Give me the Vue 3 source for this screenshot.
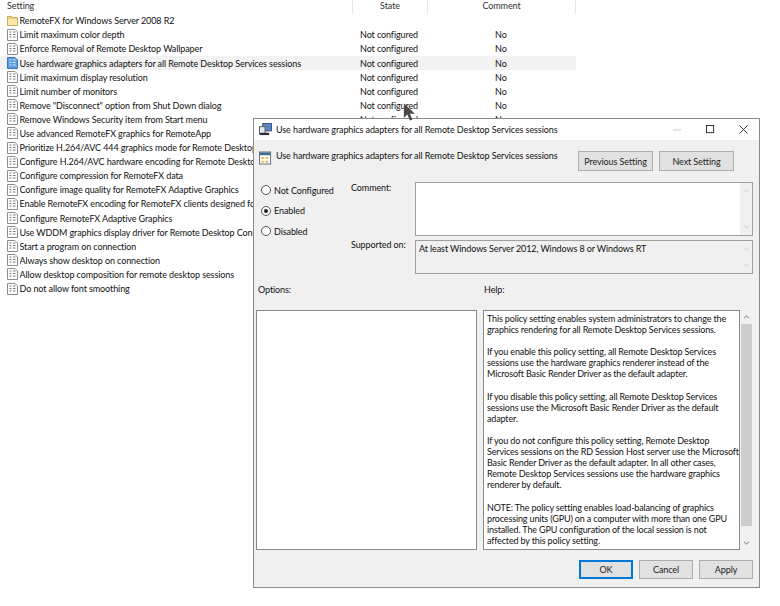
<script setup>
const rows = [
  ['folder', 'RemoteFX for Windows Server 2008 R2', '', ''],
  ['doc', 'Limit maximum color depth', 'Not configured', 'No'],
  ['doc', 'Enforce Removal of Remote Desktop Wallpaper', 'Not configured', 'No'],
  ['sel', 'Use hardware graphics adapters for all Remote Desktop Services sessions', 'Not configured', 'No'],
  ['doc', 'Limit maximum display resolution', 'Not configured', 'No'],
  ['doc', 'Limit number of monitors', 'Not configured', 'No'],
  ['doc', 'Remove "Disconnect" option from Shut Down dialog', 'Not configured', 'No'],
  ['doc', 'Remove Windows Security item from Start menu', 'Not configured', 'No'],
  ['doc', 'Use advanced RemoteFX graphics for RemoteApp', '', ''],
  ['doc', 'Prioritize H.264/AVC 444 graphics mode for Remote Desktop Connections', '', ''],
  ['doc', 'Configure H.264/AVC hardware encoding for Remote Desktop Connections', '', ''],
  ['doc', 'Configure compression for RemoteFX data', '', ''],
  ['doc', 'Configure image quality for RemoteFX Adaptive Graphics', '', ''],
  ['doc', 'Enable RemoteFX encoding for RemoteFX clients designed for Windows', '', ''],
  ['doc', 'Configure RemoteFX Adaptive Graphics', '', ''],
  ['doc', 'Use WDDM graphics display driver for Remote Desktop Connections', '', ''],
  ['doc', 'Start a program on connection', '', ''],
  ['doc', 'Always show desktop on connection', '', ''],
  ['doc', 'Allow desktop composition for remote desktop sessions', '', ''],
  ['doc', 'Do not allow font smoothing', '', '']
]
const radios = [
  ['Not Configured', false],
  ['Enabled', true],
  ['Disabled', false]
]
const help = `This policy setting enables system administrators to change the
graphics rendering for all Remote Desktop Services sessions.

If you enable this policy setting, all Remote Desktop Services
sessions use the hardware graphics renderer instead of the
Microsoft Basic Render Driver as the default adapter.

If you disable this policy setting, all Remote Desktop Services
sessions use the Microsoft Basic Render Driver as the default
adapter.

If you do not configure this policy setting, Remote Desktop
Services sessions on the RD Session Host server use the Microsoft
Basic Render Driver as the default adapter. In all other cases,
Remote Desktop Services sessions use the hardware graphics
renderer by default.

NOTE: The policy setting enables load-balancing of graphics
processing units (GPU) on a computer with more than one GPU
installed. The GPU configuration of the local session is not
affected by this policy setting.`
const title = 'Use hardware graphics adapters for all Remote Desktop Services sessions'
</script>

<template>
  <div class="page">
    <div class="head">
      <span class="h1">Setting</span>
      <span class="h2">State</span>
      <span class="h3">Comment</span>
    </div>
    <div class="list">
      <div v-for="r in rows" :key="r[1]" class="row" :class="{ selected: r[0] === 'sel' }">
        <svg v-if="r[0] === 'folder'" class="ico" viewBox="0 0 11 12">
          <path d="M.5 1.500h4l1 1h5v8H.5z" fill="#f0cf7c" stroke="#d0b060" />
          <path d="M1 4h9v6H1z" fill="#fbe6a8" />
        </svg>
        <svg v-else class="ico" viewBox="0 0 11 12">
          <path d="M.5.500h7.500l2.500 2.500v8.500H.5z" :fill="r[0] === 'sel' ? '#5b9ddd' : '#fff'" :stroke="r[0] === 'sel' ? '#3a78bd' : '#8c8c8c'" />
          <path d="M2.500 3h2M2.500 5.500h2M2.500 8h2M6 3h2.500M6 5.500h2.500M6 8h2.500" :stroke="r[0] === 'sel' ? '#dcecff' : '#777'" />
        </svg>
        <span class="name">{{ r[1] }}</span>
        <span class="state">{{ r[2] }}</span>
        <span class="comment">{{ r[3] }}</span>
      </div>
    </div>

    <section class="dialog">
      <header class="titlebar">
        <svg class="tico" viewBox="0 0 14 14">
          <rect x="4" y="0.500" width="9.500" height="8" fill="#5a86c8" stroke="#33507f" />
          <rect x="0.500" y="4" width="6" height="8" fill="#e8e8e8" stroke="#555" />
          <path d="M1 10.500h10v2.500H1z" fill="#30303a" />
        </svg>
        <span class="ttext">{{ title }}</span>
        <div class="winbtns">
          <svg viewBox="0 0 10 10"><path d="M0 5.500h9" stroke="#c6c6c6" /></svg>
          <svg viewBox="0 0 10 10"><rect x=".5" y=".5" width="8" height="8" fill="none" stroke="#222" /></svg>
          <svg viewBox="0 0 10 10"><path d="M.5.500l9 9M9.500.500l-9 9" stroke="#222" fill="none" /></svg>
        </div>
      </header>

      <div class="body">
        <div class="top">
          <svg class="pico" viewBox="0 0 14 14">
            <rect x=".5" y=".5" width="12" height="13" fill="#fff" stroke="#5b6b78" />
            <rect x="1" y="1" width="11" height="3" fill="#3d6b8f" />
            <path d="M2.500 6h3v2h-3zM7 6h3v2H7zM2.500 10h3v2h-3zM7 10h3v2H7z" fill="#e6b95a" />
          </svg>
          <span class="ptitle">{{ title }}</span>
          <div class="navbtns">
            <button class="btn nav">Previous Setting</button>
            <button class="btn nav">Next Setting</button>
          </div>
        </div>

        <div class="middle">
          <div class="radios">
            <label v-for="o in radios" :key="o[0]" class="radio">
              <span class="dot" :class="{ on: o[1] }"></span><span>{{ o[0] }}</span>
            </label>
          </div>
          <div class="fields">
            <div class="field f1">
              <span class="flabel">Comment:</span>
              <div class="box white">
                <div class="sb">
                  <svg viewBox="0 0 8 5"><path d="M1 4l3-3 3 3" fill="none" stroke="#c2c2c2" /></svg>
                  <svg viewBox="0 0 8 5"><path d="M1 1l3 3 3-3" fill="none" stroke="#c2c2c2" /></svg>
                </div>
              </div>
            </div>
            <div class="field f2">
              <span class="flabel">Supported on:</span>
              <div class="box">
                <span class="sup">At least Windows Server 2012, Windows 8 or Windows RT</span>
                <div class="sb">
                  <svg viewBox="0 0 8 5"><path d="M1 4l3-3 3 3" fill="none" stroke="#c2c2c2" /></svg>
                  <svg viewBox="0 0 8 5"><path d="M1 1l3 3 3-3" fill="none" stroke="#c2c2c2" /></svg>
                </div>
              </div>
            </div>
          </div>
        </div>

        <div class="labels">
          <span class="optlabel">Options:</span>
          <span>Help:</span>
        </div>

        <div class="panes">
          <div class="options"></div>
          <div class="help">{{ help }}</div>
          <div class="hsb">
            <svg viewBox="0 0 8 5"><path d="M1 4l3-3 3 3" fill="none" stroke="#555" /></svg>
            <div class="thumb"></div>
            <svg viewBox="0 0 8 5"><path d="M1 1l3 3 3-3" fill="none" stroke="#555" /></svg>
          </div>
        </div>

        <div class="actions">
          <button class="btn act primary">OK</button>
          <button class="btn act">Cancel</button>
          <button class="btn act">Apply</button>
        </div>
      </div>
    </section>

    <svg class="cursor" viewBox="0 0 14 20">
      <path d="M1 0v17l4-4 3 7 3-1-3-7h6z" fill="#4a4a4a" />
    </svg>
  </div>
</template>

<style>
html, body { margin: 0; background: #fff; }
</style>

<style scoped>
.page {
  position: relative;
  width: 780px;
  height: 606px;
  overflow: hidden;
  background: #fff;
  font-family: Lato, "Liberation Sans", sans-serif;
  font-size: 9px;
  letter-spacing: -0.100px;
  color: #111;
}
.head {
  display: flex;
  height: 13.700px;
  line-height: 11px;
  color: #333;
}
.h1 { width: 353px; padding-left: 7px; box-sizing: border-box; border-right: 1px solid #e8e8e8; }
.h2 { width: 74px; text-align: center; border-right: 1px solid #e8e8e8; }
.h3 { width: 147px; text-align: center; border-right: 1px solid #e8e8e8; }
.list { width: 576px; }
.row {
  display: flex;
  align-items: center;
  height: 14.100px;
  padding-left: 7px;
}
.row.selected { background: #f2f2f2; }
.ico { width: 11px; height: 12px; flex: none; margin-right: 1.500px; }
.name { width: 340.500px; flex: none; white-space: nowrap; overflow: hidden; }
.state { width: 135px; flex: none; }
.comment { flex: none; }
.cursor {
  position: absolute;
  left: 403px;
  top: 103px;
  width: 12px;
  height: 18px;
}
.dialog {
  position: absolute;
  left: 253px;
  top: 118px;
  width: 507px;
  height: 470px;
  box-sizing: border-box;
  border: 1px solid #8a8a8a;
  background: #f0f0f0;
  display: flex;
  flex-direction: column;
}
.titlebar {
  height: 21px;
  background: #fff;
  display: flex;
  align-items: center;
  padding-left: 5px;
  flex: none;
}
.tico { width: 13px; height: 13px; margin-right: 4px; flex: none; }
.ttext { flex: 1; }
.winbtns { display: flex; gap: 24px; margin-right: 11px; }
.winbtns svg { width: 9px; height: 9px; }
.body { flex: 1; display: flex; flex-direction: column; padding: 0 6px 0 2px; }
.top { display: flex; align-items: flex-start; height: 35px; padding-top: 9px; box-sizing: border-box; flex: none; }
.pico { width: 13px; height: 14px; margin: 2px 4px 0 3px; flex: none; }
.ptitle { flex: 1; padding-top: 1px; white-space: nowrap; }
.navbtns { display: flex; gap: 6px; margin-top: 2px; margin-right: 19px; }
.btn {
  font: inherit;
  letter-spacing: inherit;
  color: #222;
  padding: 0;
  background: #e1e1e1;
  border: 1px solid #adadad;
  box-sizing: border-box;
  white-space: nowrap;
}
.nav { width: 75px; height: 20px; }
.middle { display: flex; height: 107px; flex: none; }
.radios { width: 95px; display: flex; flex-direction: column; gap: 6.500px; padding-top: 8px; padding-left: 5px; box-sizing: border-box; flex: none; }
.radio { display: flex; align-items: center; height: 14px; white-space: nowrap; }
.dot {
  width: 8px;
  height: 8px;
  border: 1px solid #555;
  border-radius: 50%;
  background: #fff;
  margin-right: 3px;
  position: relative;
  flex: none;
}
.dot.on::after {
  content: "";
  position: absolute;
  inset: 2px;
  border-radius: 50%;
  background: #222;
}
.fields { flex: 1; display: flex; flex-direction: column; gap: 4px; padding-top: 7px; }
.field { display: flex; }
.flabel { width: 64px; flex: none; white-space: nowrap; }
.box {
  flex: 1;
  display: flex;
  border: 1px solid #a0a0a0;
  box-sizing: border-box;
}
.box.white { background: #fff; }
.f1 .box { height: 54px; }
.f2 .box { height: 34px; }
.f2 .flabel { margin-top: -1px; }
.sup { flex: 1; padding: 2px 0 0 3px; white-space: nowrap; }
.sb {
  margin-left: auto;
  width: 12px;
  background: #f0f0f0;
  display: flex;
  flex-direction: column;
  justify-content: space-between;
  align-items: center;
  padding: 6px 0;
  box-sizing: border-box;
}
.sb svg { width: 7px; height: 4px; }
.labels { display: flex; height: 28px; padding-top: 2px; box-sizing: border-box; flex: none; }
.optlabel { width: 228px; padding-left: 2px; box-sizing: border-box; }
.panes { display: flex; height: 240px; flex: none; }
.options { width: 221px; margin: 0 6px 0 0; background: #fff; border: 1px solid #8a8a8a; box-sizing: border-box; flex: none; }
.help {
  flex: 1;
  background: #fff;
  border: 1px solid #8a8a8a;
  box-sizing: border-box;
  padding: 2px 0 0 3px;
  line-height: 11.100px;
  letter-spacing: -0.150px;
  white-space: pre;
  overflow: hidden;
}
.hsb {
  width: 13px;
  display: flex;
  flex-direction: column;
  align-items: center;
  flex: none;
}
.hsb svg { width: 7px; height: 4px; margin: 5px 0; flex: none; }
.thumb { width: 11px; flex: 1; background: #cdcdcd; margin-bottom: 10px; }
.actions { display: flex; justify-content: flex-end; gap: 6px; margin-top: 10px; flex: none; }
.act { width: 54px; height: 19px; }
.primary { border: 1px solid #0078d7; box-shadow: inset 0 0 0 1px #0078d7; }
</style>
